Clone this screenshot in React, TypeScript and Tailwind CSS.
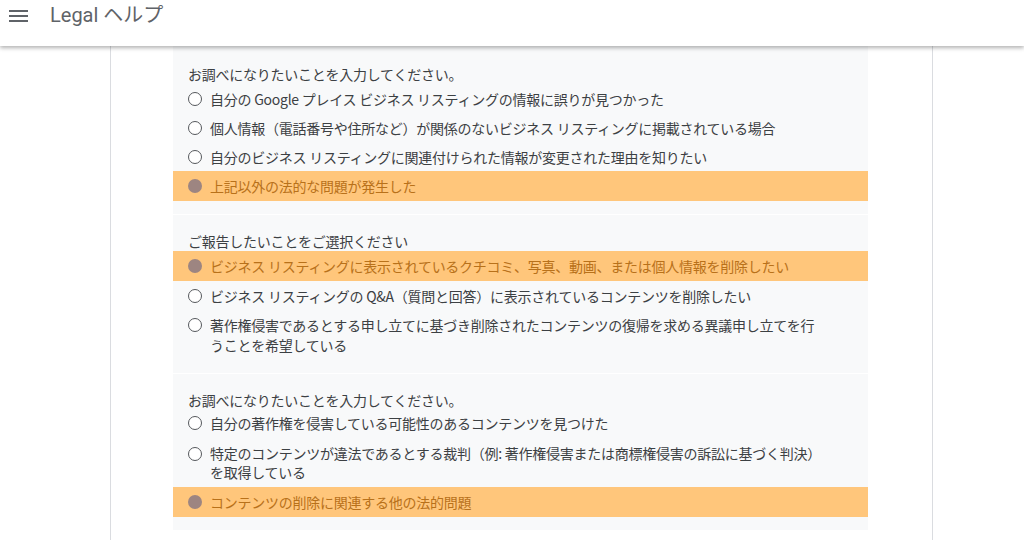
import type { ReactNode } from "react";

type Option = { label: ReactNode; selected?: boolean; cls?: string };

interface SectionProps {
    title: string;
    options: Option[];
    className?: string;
}

const Radio = ({ selected }: { selected?: boolean }) =>
    selected ? (
        <span className="mt-[3px] block size-[14px] shrink-0 rounded-full bg-[#9d8581]" />
    ) : (
        <span className="mt-[3px] block size-[14px] shrink-0 rounded-full border border-[#55585c] bg-white" />
    );

const Section = ({ title, options, className }: SectionProps) => (
    <section className={className}>
        <p className="px-[15px] leading-[20px]">{title}</p>
        {options.map((o, i) => (
            <div
                key={i}
                className={
                    "flex gap-[8px] px-[15px] " +
                    (o.selected ? "bg-[#ffc67b] py-[5px] text-[#b8711a]" : o.cls ?? "py-[4.5px]")
                }
            >
                <Radio selected={o.selected} />
                <span className="max-w-[614px] leading-[inherit]">{o.label}</span>
            </div>
        ))}
    </section>
);

export default function App() {
    return (
        <div
            className="flex h-[540px] flex-col overflow-hidden bg-white text-[14px] leading-[20px] tracking-[-0.25px] text-[#3c4043]"
            style={{ fontFamily: '"Noto Sans CJK JP", "Noto Sans", sans-serif' }}
        >
            <header className="relative z-10 flex h-[46px] shrink-0 items-start bg-white shadow-[0_2px_4px_rgba(0,0,0,0.3)]">
                <svg className="ml-[9px] mt-[9px]" width="19" height="14" viewBox="0 0 19 14" fill="#5f6368">
                    <rect x="0" y="1" width="19" height="2" />
                    <rect x="0" y="6" width="19" height="2" />
                    <rect x="0" y="11" width="19" height="2" />
                </svg>
                <h1
                    className="ml-[22px] mt-[2px] text-[20px] leading-[26px] tracking-normal text-[#5f6368]"
                    style={{ fontFamily: 'Roboto, "Noto Sans CJK JP", sans-serif' }}
                >
                    Legal ヘルプ
                </h1>
            </header>

            <main className="ml-[110px] flex w-[823px] flex-1 border-x border-[#dadce0] pl-[62px]">
                <div className="w-[695px] self-start bg-[#f8f9fa]">
                    <Section
                        className="pb-[13px] pt-[18px]"
                        title="お調べになりたいことを入力してください。"
                        options={[
                            { label: "自分の Google プレイス ビジネス リスティングの情報に誤りが見つかった" },
                            { label: "個人情報（電話番号や住所など）が関係のないビジネス リスティングに掲載されている場合" },
                            { label: "自分のビジネス リスティングに関連付けられた情報が変更された理由を知りたい" },
                            { label: "上記以外の法的な問題が発生した", selected: true },
                        ]}
                    />
                    <Section
                        className="border-t border-white pb-[14px] pt-[16px]"
                        title="ご報告したいことをご選択ください"
                        options={[
                            {
                                label: "ビジネス リスティングに表示されているクチコミ、写真、動画、または個人情報を削除したい",
                                selected: true,
                            },
                            { label: "ビジネス リスティングの Q&A（質問と回答）に表示されているコンテンツを削除したい" },
                            {
                                label: "著作権侵害であるとする申し立てに基づき削除されたコンテンツの復帰を求める異議申し立てを行うことを希望している",
                            },
                        ]}
                    />
                    <Section
                        className="border-t border-white pb-[13px] pt-[16px]"
                        title="お調べになりたいことを入力してください。"
                        options={[
                            { label: "自分の著作権を侵害している可能性のあるコンテンツを見つけた", cls: "py-[3px]" },
                            {
                                label: "特定のコンテンツが違法であるとする裁判（例: 著作権侵害または商標権侵害の訴訟に基づく判決）を取得している",
                                cls: "pt-[8px] pb-[5px] leading-[19px]",
                            },
                            { label: "コンテンツの削除に関連する他の法的問題", selected: true },
                        ]}
                    />
                </div>
            </main>
        </div>
    );
}
